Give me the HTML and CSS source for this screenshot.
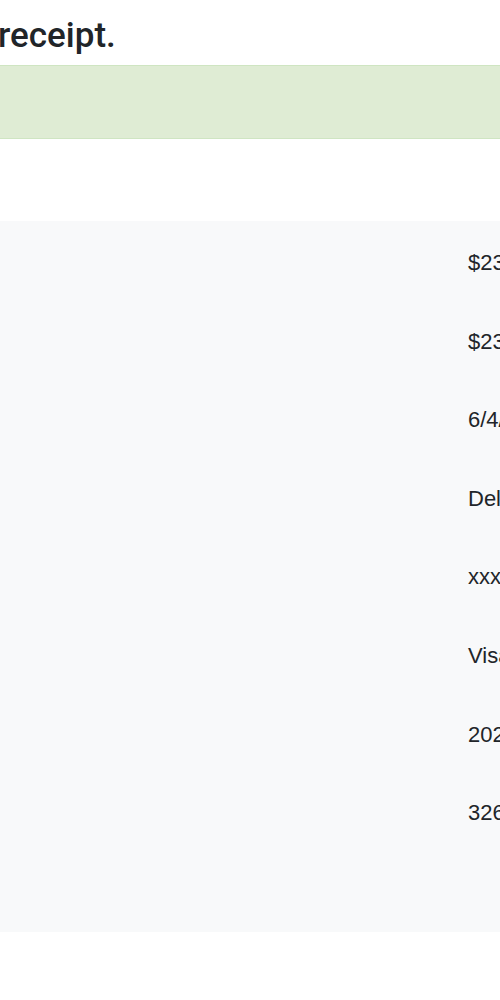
FILE: index.html
```html
<!doctype html>
<html>
<head>
<meta charset="utf-8">
<title>Receipt</title>
<link rel="stylesheet" href="styles.css">
</head>
<body>
<div class="page">
	<h1 class="title">receipt.</h1>
	<div class="alert"></div>
	<div class="receipt">
		<ul class="rows">
			<li>$23.00</li>
			<li>$23.00</li>
			<li>6/4/2024</li>
			<li>Delivered</li>
			<li>xxxx-xxxx-xxxx-4242</li>
			<li>Visa</li>
			<li>2024-06-04</li>
			<li>3268</li>
		</ul>
	</div>
</div>
</body>
</html>
```

FILE: styles.css
```css
*{margin:0;padding:0;list-style:none;box-sizing:border-box;}
html,body{width:500px;overflow:hidden;background:#fff;}
body{font-family:"Liberation Sans",Arial,sans-serif;color:#212529;}

.page{width:500px;}
.title{font-family:Roboto,"Liberation Sans",sans-serif;font-size:35px;font-weight:500;line-height:40px;padding-top:16px;margin-left:-2px;color:#212529;white-space:nowrap;}
.alert{height:74px;margin-top:9px;background:#dfecd4;border-top:1px solid #cfe5c2;border-bottom:1px solid #cfe5c2;}

.receipt{margin-top:82px;height:711px;background:#f8f9fa;padding-top:3px;}
.rows li{height:78.6px;line-height:78.6px;padding-left:468px;font-size:22px;white-space:nowrap;}
```
